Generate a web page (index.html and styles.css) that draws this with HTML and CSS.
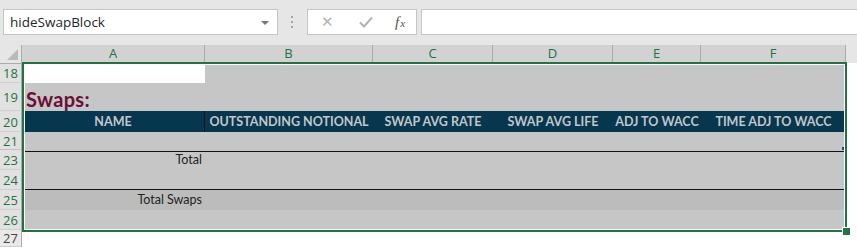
FILE: index.html
```html
<!DOCTYPE html>
<html lang="en">
<head>
    <meta charset="UTF-8">
    <title>hideSwapBlock</title>
    <link rel="stylesheet" href="styles.css">
</head>
<body>
    <div class="formula-bar">
        <div class="name-box">
            <span>hideSwapBlock</span>
            <span class="name-box__arrow"></span>
        </div>
        <div class="grip"></div>
        <div class="fx-buttons">
            <span class="fx-btn">&#x2715;</span>
            <span class="fx-btn fx-btn--check">
                <svg width="14" height="12" viewBox="0 0 14 12"><path d="M1 6.5 L5 10.5 L13 1.5" fill="none" stroke="#b4b4b4" stroke-width="2"/></svg>
            </span>
            <span class="fx-btn fx-btn--fx"><i>f</i><i class="x">x</i></span>
        </div>
        <div class="formula-input"></div>
    </div>

    <div class="sheet">
        <div class="row row--head">
            <div class="corner"><span class="corner__tri"></span></div>
            <div class="col-head">A</div>
            <div class="col-head">B</div>
            <div class="col-head">C</div>
            <div class="col-head">D</div>
            <div class="col-head">E</div>
            <div class="col-head">F</div>
            <div class="col-head col-head--rest"></div>
        </div>

        <div class="row r18">
            <div class="row-head">18</div>
            <div class="cell cell--active"></div>
            <div class="cell span-5"></div>
            <div class="cell cell--blank"></div>
        </div>

        <div class="row r19">
            <div class="row-head">19</div>
            <div class="cell span-6"><span class="title">Swaps:</span></div>
            <div class="cell cell--blank"></div>
        </div>

        <div class="row r20">
            <div class="row-head">20</div>
            <div class="cell th th--first">NAME</div>
            <div class="cell th">OUTSTANDING NOTIONAL</div>
            <div class="cell th">SWAP AVG RATE</div>
            <div class="cell th">SWAP AVG LIFE</div>
            <div class="cell th">ADJ TO WACC</div>
            <div class="cell th">TIME ADJ TO WACC</div>
            <div class="cell cell--blank"></div>
        </div>

        <div class="row r21">
            <div class="row-head row-head--hidden-after">21</div>
            <div class="cell span-6 ruled"><span class="resize-mark"></span></div>
            <div class="cell cell--blank"></div>
        </div>

        <div class="row r23">
            <div class="row-head">23</div>
            <div class="cell label">Total</div>
            <div class="cell span-5"></div>
            <div class="cell cell--blank"></div>
        </div>

        <div class="row r24">
            <div class="row-head">24</div>
            <div class="cell span-6 ruled"></div>
            <div class="cell cell--blank"></div>
        </div>

        <div class="row r25">
            <div class="row-head">25</div>
            <div class="cell label cell--dark">Total Swaps</div>
            <div class="cell span-5 cell--dark"></div>
            <div class="cell cell--blank"></div>
        </div>

        <div class="row r26">
            <div class="row-head">26</div>
            <div class="cell span-6"></div>
            <div class="cell cell--blank"></div>
        </div>

        <div class="row r27">
            <div class="row-head row-head--plain">27</div>
            <div class="cell cell--blank span-7"></div>
        </div>

        <div class="selection"><span class="selection__handle"></span></div>
    </div>
</body>
</html>
```

FILE: styles.css
```css
:root {
    --xl-green: #217346;
    --toolbar: #e6e6e6;
    --sel-fill: #c6c6c6;
    --sel-dark: #bcbcbc;
    --head-dark: #06374f;
    --cols: 22px 183px 168px 120px 120px 88px 145px 1fr;
    --ui-font: "Open Sans", "Noto Sans", sans-serif;
    --cell-font: Lato, "Liberation Sans", sans-serif;
}

* {
    box-sizing: border-box;
}

body {
    margin: 0;
    width: 857px;
    height: 247px;
    overflow: hidden;
    background: #fff;
    font-family: var(--cell-font);
}

/* Barra de fórmulas */
.formula-bar {
    height: 45px;
    background: var(--toolbar);
    display: flex;
    align-items: flex-start;
    padding: 9px 0 0 3px;
}

.name-box {
    width: 275px;
    height: 26px;
    background: #fff;
    border: 1px solid #c6c6c6;
    display: flex;
    align-items: center;
    justify-content: space-between;
    padding: 0 8px 0 6px;
    font-family: var(--ui-font);
    font-size: 13.5px;
    color: #262626;
}

.name-box__arrow {
    width: 0;
    height: 0;
    border-left: 4px solid transparent;
    border-right: 4px solid transparent;
    border-top: 4px solid #777;
    margin-top: 1px;
}

.grip {
    width: 2px;
    height: 12px;
    margin: 7px 14px 0 13px;
    background: repeating-linear-gradient(to bottom, #a6a6a6 0 2px, transparent 2px 5px);
}

.fx-buttons {
    width: 110px;
    height: 26px;
    background: #fff;
    border: 1px solid #c6c6c6;
    display: flex;
    align-items: center;
    padding: 0 6px 0 13px;
}

.fx-btn {
    color: #b4b4b4;
    font-size: 15px;
    font-family: "DejaVu Sans", sans-serif;
    width: 37px;
    display: flex;
    align-items: center;
}

.fx-btn--check {
    padding-left: 1px;
}

.fx-btn--fx {
    width: auto;
    color: #555;
    font-family: "Liberation Serif", serif;
    font-size: 15px;
}

.fx-btn--fx .x {
    font-size: 11px;
    margin-left: 1px;
    margin-top: 2px;
}

.formula-input {
    margin-left: 4px;
    flex: 1;
    height: 26px;
    background: #fff;
    border: 1px solid #c6c6c6;
    border-right: none;
}

/* Hoja */
.sheet {
    position: relative;
}

.row {
    display: grid;
    grid-template-columns: var(--cols);
}

.row--head {
    height: 18px;
}

.corner {
    background: var(--toolbar);
    border-right: 1px solid #ababab;
    border-bottom: 1px solid #ababab;
    position: relative;
}

.corner__tri {
    position: absolute;
    right: 3px;
    bottom: 3px;
    width: 0;
    height: 0;
    border-left: 11px solid transparent;
    border-bottom: 11px solid #b9b9b9;
}

.col-head {
    background: #d2d2d2;
    border-right: 1px solid #ababab;
    border-bottom: 2px solid var(--xl-green);
    font-family: var(--ui-font);
    font-size: 13px;
    color: var(--xl-green);
    text-align: center;
    line-height: 17px;
}

.col-head--rest {
    background: var(--toolbar);
    border-right: none;
    border-bottom: 1px solid #ababab;
}

.row-head {
    background: #e1e1e1;
    border-right: 1px solid #ababab;
    border-bottom: 1px solid #cfcfcf;
    font-family: var(--ui-font);
    font-size: 13px;
    line-height: 16px;
    color: var(--xl-green);
    display: flex;
    align-items: center;
    justify-content: center;
    padding-top: 1px;
}

.row-head--hidden-after {
    border-bottom: 3px double #c2c2c2;
}

.row-head--plain {
    background: #e9e9e9;
    color: #444;
    align-items: flex-start;
    padding-top: 1px;
    line-height: 15px;
}

.r18 { height: 20px; }
.r19 { height: 28px; }
.r20 { height: 21px; }
.r21 { height: 18px; }
.r23 { height: 20px; }
.r24 { height: 20px; }
.r25 { height: 20px; }
.r26 { height: 20px; }
.r27 { height: 17px; }

.cell {
    background: var(--sel-fill);
    font-size: 12.5px;
    color: #222;
}

.span-5 { grid-column: span 5; }
.span-6 { grid-column: span 6; }
.span-7 { grid-column: span 7; }

.cell--active {
    background: #fff;
}

.cell--blank {
    background: #fff;
}

.cell--dark {
    background: var(--sel-dark);
}

.title {
    display: block;
    padding: 5px 0 0 4px;
    font-size: 20px;
    font-weight: 700;
    color: #6b0d34;
    line-height: 23px;
    letter-spacing: 0.3px;
}

.th {
    background: var(--head-dark);
    color: #c3c6c9;
    font-weight: 700;
    font-size: 12.5px;
    text-align: center;
    line-height: 21px;
    white-space: nowrap;
}

.th--first {
    border-right: 1px solid #111;
}

.ruled {
    border-bottom: 1px solid #111;
    position: relative;
}

.resize-mark {
    position: absolute;
    right: 1px;
    bottom: 1px;
    width: 3px;
    height: 3px;
    background: #3a3f7a;
}

.label {
    text-align: right;
    padding-right: 3px;
    line-height: 20px;
}

/* Selección */
.selection {
    position: absolute;
    left: 22px;
    top: 17px;
    width: 825px;
    height: 170px;
    border: 2px solid var(--xl-green);
    box-shadow: inset 0 0 0 1px #fff;
    pointer-events: none;
}

.selection__handle {
    position: absolute;
    right: -5px;
    bottom: -5px;
    width: 7px;
    height: 7px;
    background: var(--xl-green);
    outline: 1px solid #fff;
}
```
